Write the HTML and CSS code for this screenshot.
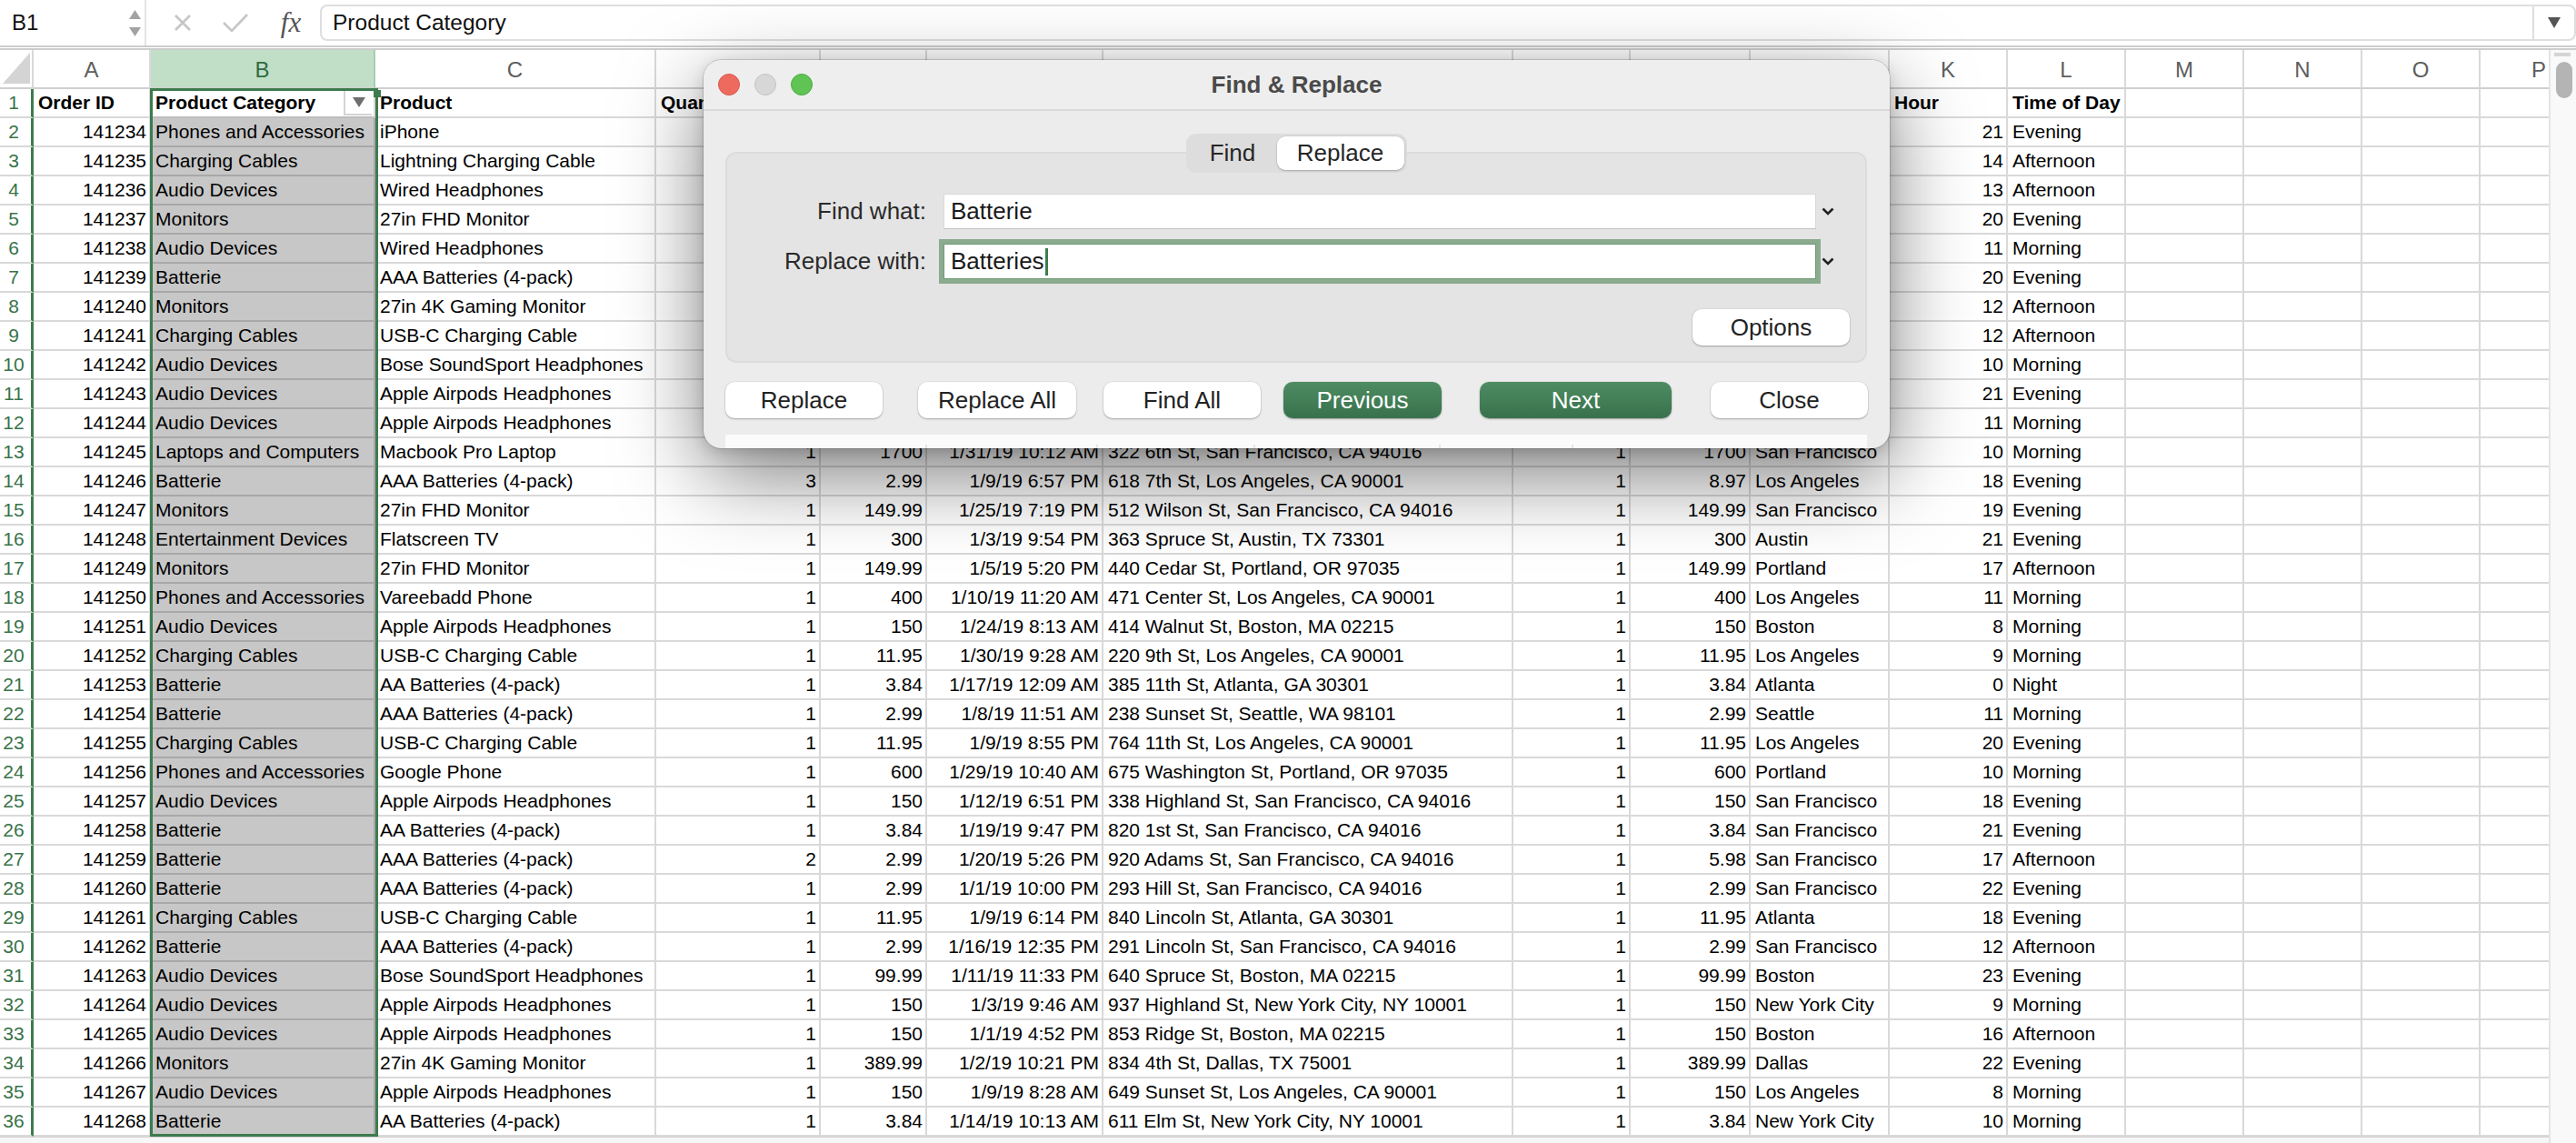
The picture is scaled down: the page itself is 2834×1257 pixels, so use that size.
FILE: index.html
```html
<!DOCTYPE html>
<html lang="en">
<head>
<meta charset="utf-8">
<title>Find &amp; Replace</title>
<link rel="stylesheet" href="styles.css">
</head>
<body>
<div class="fbar">
  <div class="namebox">
    <span>B1</span>
    <span class="spin">
      <svg width="13" height="10" viewBox="0 0 13 10"><polygon points="6.5,0 13,10 0,10" fill="#a3a3a3"/></svg>
      <svg width="13" height="10" viewBox="0 0 13 10"><polygon points="0,0 13,0 6.5,10" fill="#a3a3a3"/></svg>
    </span>
  </div>
  <div class="fbtns">
    <span class="fi"><svg width="20" height="18" viewBox="0 0 20 18"><path d="M2 1 L18 17 M18 1 L2 17" stroke="#c6c6c6" stroke-width="2.6" fill="none"/></svg></span>
    <span class="fi"><svg width="30" height="22" viewBox="0 0 30 22"><polyline points="2,11 11,20 28,2" stroke="#c6c6c6" stroke-width="2.6" fill="none"/></svg></span>
    <span class="fi fx">fx</span>
  </div>
  <div class="fxin">Product Category</div>
  <div class="fxdd"><svg width="14" height="12" viewBox="0 0 14 12"><polygon points="0,0 14,0 7,12" fill="#555"/></svg></div>
</div>
<div class="sep"></div>
<div class="sheetwrap">
  <div class="sheet">
    <div class="row colhdr"><span class="corner"><svg width="30" height="34" viewBox="0 0 30 34"><polygon points="30,0 30,34 0,34" fill="#d4d4d4"/></svg></span><span>A</span><span class="s">B</span><span>C</span><span>D</span><span>E</span><span>F</span><span>G</span><span>H</span><span>I</span><span>J</span><span>K</span><span>L</span><span>M</span><span>N</span><span>O</span><span>P</span></div>
    <div class="row r1"><span class="rh">1</span><span>Order ID</span><span class="act">Product Category<b class="filt"><svg width="14" height="11" viewBox="0 0 14 11"><polygon points="0,0 14,0 7,11" fill="#6e6e6e"/></svg></b></span><span>Product</span><span>Quantity Ordered</span><span></span><span></span><span></span><span></span><span></span><span></span><span>Hour</span><span>Time of Day</span><span></span><span></span><span></span><span></span></div>
    <div class="row"><span class="rh">2</span><span class="n">141234</span><span class="s">Phones and Accessories</span><span>iPhone</span><span></span><span></span><span></span><span></span><span></span><span></span><span></span><span class="n">21</span><span>Evening</span><span></span><span></span><span></span><span></span></div>
    <div class="row"><span class="rh">3</span><span class="n">141235</span><span class="s">Charging Cables</span><span>Lightning Charging Cable</span><span></span><span></span><span></span><span></span><span></span><span></span><span></span><span class="n">14</span><span>Afternoon</span><span></span><span></span><span></span><span></span></div>
    <div class="row"><span class="rh">4</span><span class="n">141236</span><span class="s">Audio Devices</span><span>Wired Headphones</span><span></span><span></span><span></span><span></span><span></span><span></span><span></span><span class="n">13</span><span>Afternoon</span><span></span><span></span><span></span><span></span></div>
    <div class="row"><span class="rh">5</span><span class="n">141237</span><span class="s">Monitors</span><span>27in FHD Monitor</span><span></span><span></span><span></span><span></span><span></span><span></span><span></span><span class="n">20</span><span>Evening</span><span></span><span></span><span></span><span></span></div>
    <div class="row"><span class="rh">6</span><span class="n">141238</span><span class="s">Audio Devices</span><span>Wired Headphones</span><span></span><span></span><span></span><span></span><span></span><span></span><span></span><span class="n">11</span><span>Morning</span><span></span><span></span><span></span><span></span></div>
    <div class="row"><span class="rh">7</span><span class="n">141239</span><span class="s">Batterie</span><span>AAA Batteries (4-pack)</span><span></span><span></span><span></span><span></span><span></span><span></span><span></span><span class="n">20</span><span>Evening</span><span></span><span></span><span></span><span></span></div>
    <div class="row"><span class="rh">8</span><span class="n">141240</span><span class="s">Monitors</span><span>27in 4K Gaming Monitor</span><span></span><span></span><span></span><span></span><span></span><span></span><span></span><span class="n">12</span><span>Afternoon</span><span></span><span></span><span></span><span></span></div>
    <div class="row"><span class="rh">9</span><span class="n">141241</span><span class="s">Charging Cables</span><span>USB-C Charging Cable</span><span></span><span></span><span></span><span></span><span></span><span></span><span></span><span class="n">12</span><span>Afternoon</span><span></span><span></span><span></span><span></span></div>
    <div class="row"><span class="rh">10</span><span class="n">141242</span><span class="s">Audio Devices</span><span>Bose SoundSport Headphones</span><span></span><span></span><span></span><span></span><span></span><span></span><span></span><span class="n">10</span><span>Morning</span><span></span><span></span><span></span><span></span></div>
    <div class="row"><span class="rh">11</span><span class="n">141243</span><span class="s">Audio Devices</span><span>Apple Airpods Headphones</span><span></span><span></span><span></span><span></span><span></span><span></span><span></span><span class="n">21</span><span>Evening</span><span></span><span></span><span></span><span></span></div>
    <div class="row"><span class="rh">12</span><span class="n">141244</span><span class="s">Audio Devices</span><span>Apple Airpods Headphones</span><span></span><span></span><span></span><span></span><span></span><span></span><span></span><span class="n">11</span><span>Morning</span><span></span><span></span><span></span><span></span></div>
    <div class="row"><span class="rh">13</span><span class="n">141245</span><span class="s">Laptops and Computers</span><span>Macbook Pro Laptop</span><span class="n">1</span><span class="n">1700</span><span class="n">1/31/19 10:12 AM</span><span>322 6th St, San Francisco, CA 94016</span><span class="n">1</span><span class="n">1700</span><span>San Francisco</span><span class="n">10</span><span>Morning</span><span></span><span></span><span></span><span></span></div>
    <div class="row"><span class="rh">14</span><span class="n">141246</span><span class="s">Batterie</span><span>AAA Batteries (4-pack)</span><span class="n">3</span><span class="n">2.99</span><span class="n">1/9/19 6:57 PM</span><span>618 7th St, Los Angeles, CA 90001</span><span class="n">1</span><span class="n">8.97</span><span>Los Angeles</span><span class="n">18</span><span>Evening</span><span></span><span></span><span></span><span></span></div>
    <div class="row"><span class="rh">15</span><span class="n">141247</span><span class="s">Monitors</span><span>27in FHD Monitor</span><span class="n">1</span><span class="n">149.99</span><span class="n">1/25/19 7:19 PM</span><span>512 Wilson St, San Francisco, CA 94016</span><span class="n">1</span><span class="n">149.99</span><span>San Francisco</span><span class="n">19</span><span>Evening</span><span></span><span></span><span></span><span></span></div>
    <div class="row"><span class="rh">16</span><span class="n">141248</span><span class="s">Entertainment Devices</span><span>Flatscreen TV</span><span class="n">1</span><span class="n">300</span><span class="n">1/3/19 9:54 PM</span><span>363 Spruce St, Austin, TX 73301</span><span class="n">1</span><span class="n">300</span><span>Austin</span><span class="n">21</span><span>Evening</span><span></span><span></span><span></span><span></span></div>
    <div class="row"><span class="rh">17</span><span class="n">141249</span><span class="s">Monitors</span><span>27in FHD Monitor</span><span class="n">1</span><span class="n">149.99</span><span class="n">1/5/19 5:20 PM</span><span>440 Cedar St, Portland, OR 97035</span><span class="n">1</span><span class="n">149.99</span><span>Portland</span><span class="n">17</span><span>Afternoon</span><span></span><span></span><span></span><span></span></div>
    <div class="row"><span class="rh">18</span><span class="n">141250</span><span class="s">Phones and Accessories</span><span>Vareebadd Phone</span><span class="n">1</span><span class="n">400</span><span class="n">1/10/19 11:20 AM</span><span>471 Center St, Los Angeles, CA 90001</span><span class="n">1</span><span class="n">400</span><span>Los Angeles</span><span class="n">11</span><span>Morning</span><span></span><span></span><span></span><span></span></div>
    <div class="row"><span class="rh">19</span><span class="n">141251</span><span class="s">Audio Devices</span><span>Apple Airpods Headphones</span><span class="n">1</span><span class="n">150</span><span class="n">1/24/19 8:13 AM</span><span>414 Walnut St, Boston, MA 02215</span><span class="n">1</span><span class="n">150</span><span>Boston</span><span class="n">8</span><span>Morning</span><span></span><span></span><span></span><span></span></div>
    <div class="row"><span class="rh">20</span><span class="n">141252</span><span class="s">Charging Cables</span><span>USB-C Charging Cable</span><span class="n">1</span><span class="n">11.95</span><span class="n">1/30/19 9:28 AM</span><span>220 9th St, Los Angeles, CA 90001</span><span class="n">1</span><span class="n">11.95</span><span>Los Angeles</span><span class="n">9</span><span>Morning</span><span></span><span></span><span></span><span></span></div>
    <div class="row"><span class="rh">21</span><span class="n">141253</span><span class="s">Batterie</span><span>AA Batteries (4-pack)</span><span class="n">1</span><span class="n">3.84</span><span class="n">1/17/19 12:09 AM</span><span>385 11th St, Atlanta, GA 30301</span><span class="n">1</span><span class="n">3.84</span><span>Atlanta</span><span class="n">0</span><span>Night</span><span></span><span></span><span></span><span></span></div>
    <div class="row"><span class="rh">22</span><span class="n">141254</span><span class="s">Batterie</span><span>AAA Batteries (4-pack)</span><span class="n">1</span><span class="n">2.99</span><span class="n">1/8/19 11:51 AM</span><span>238 Sunset St, Seattle, WA 98101</span><span class="n">1</span><span class="n">2.99</span><span>Seattle</span><span class="n">11</span><span>Morning</span><span></span><span></span><span></span><span></span></div>
    <div class="row"><span class="rh">23</span><span class="n">141255</span><span class="s">Charging Cables</span><span>USB-C Charging Cable</span><span class="n">1</span><span class="n">11.95</span><span class="n">1/9/19 8:55 PM</span><span>764 11th St, Los Angeles, CA 90001</span><span class="n">1</span><span class="n">11.95</span><span>Los Angeles</span><span class="n">20</span><span>Evening</span><span></span><span></span><span></span><span></span></div>
    <div class="row"><span class="rh">24</span><span class="n">141256</span><span class="s">Phones and Accessories</span><span>Google Phone</span><span class="n">1</span><span class="n">600</span><span class="n">1/29/19 10:40 AM</span><span>675 Washington St, Portland, OR 97035</span><span class="n">1</span><span class="n">600</span><span>Portland</span><span class="n">10</span><span>Morning</span><span></span><span></span><span></span><span></span></div>
    <div class="row"><span class="rh">25</span><span class="n">141257</span><span class="s">Audio Devices</span><span>Apple Airpods Headphones</span><span class="n">1</span><span class="n">150</span><span class="n">1/12/19 6:51 PM</span><span>338 Highland St, San Francisco, CA 94016</span><span class="n">1</span><span class="n">150</span><span>San Francisco</span><span class="n">18</span><span>Evening</span><span></span><span></span><span></span><span></span></div>
    <div class="row"><span class="rh">26</span><span class="n">141258</span><span class="s">Batterie</span><span>AA Batteries (4-pack)</span><span class="n">1</span><span class="n">3.84</span><span class="n">1/19/19 9:47 PM</span><span>820 1st St, San Francisco, CA 94016</span><span class="n">1</span><span class="n">3.84</span><span>San Francisco</span><span class="n">21</span><span>Evening</span><span></span><span></span><span></span><span></span></div>
    <div class="row"><span class="rh">27</span><span class="n">141259</span><span class="s">Batterie</span><span>AAA Batteries (4-pack)</span><span class="n">2</span><span class="n">2.99</span><span class="n">1/20/19 5:26 PM</span><span>920 Adams St, San Francisco, CA 94016</span><span class="n">1</span><span class="n">5.98</span><span>San Francisco</span><span class="n">17</span><span>Afternoon</span><span></span><span></span><span></span><span></span></div>
    <div class="row"><span class="rh">28</span><span class="n">141260</span><span class="s">Batterie</span><span>AAA Batteries (4-pack)</span><span class="n">1</span><span class="n">2.99</span><span class="n">1/1/19 10:00 PM</span><span>293 Hill St, San Francisco, CA 94016</span><span class="n">1</span><span class="n">2.99</span><span>San Francisco</span><span class="n">22</span><span>Evening</span><span></span><span></span><span></span><span></span></div>
    <div class="row"><span class="rh">29</span><span class="n">141261</span><span class="s">Charging Cables</span><span>USB-C Charging Cable</span><span class="n">1</span><span class="n">11.95</span><span class="n">1/9/19 6:14 PM</span><span>840 Lincoln St, Atlanta, GA 30301</span><span class="n">1</span><span class="n">11.95</span><span>Atlanta</span><span class="n">18</span><span>Evening</span><span></span><span></span><span></span><span></span></div>
    <div class="row"><span class="rh">30</span><span class="n">141262</span><span class="s">Batterie</span><span>AAA Batteries (4-pack)</span><span class="n">1</span><span class="n">2.99</span><span class="n">1/16/19 12:35 PM</span><span>291 Lincoln St, San Francisco, CA 94016</span><span class="n">1</span><span class="n">2.99</span><span>San Francisco</span><span class="n">12</span><span>Afternoon</span><span></span><span></span><span></span><span></span></div>
    <div class="row"><span class="rh">31</span><span class="n">141263</span><span class="s">Audio Devices</span><span>Bose SoundSport Headphones</span><span class="n">1</span><span class="n">99.99</span><span class="n">1/11/19 11:33 PM</span><span>640 Spruce St, Boston, MA 02215</span><span class="n">1</span><span class="n">99.99</span><span>Boston</span><span class="n">23</span><span>Evening</span><span></span><span></span><span></span><span></span></div>
    <div class="row"><span class="rh">32</span><span class="n">141264</span><span class="s">Audio Devices</span><span>Apple Airpods Headphones</span><span class="n">1</span><span class="n">150</span><span class="n">1/3/19 9:46 AM</span><span>937 Highland St, New York City, NY 10001</span><span class="n">1</span><span class="n">150</span><span>New York City</span><span class="n">9</span><span>Morning</span><span></span><span></span><span></span><span></span></div>
    <div class="row"><span class="rh">33</span><span class="n">141265</span><span class="s">Audio Devices</span><span>Apple Airpods Headphones</span><span class="n">1</span><span class="n">150</span><span class="n">1/1/19 4:52 PM</span><span>853 Ridge St, Boston, MA 02215</span><span class="n">1</span><span class="n">150</span><span>Boston</span><span class="n">16</span><span>Afternoon</span><span></span><span></span><span></span><span></span></div>
    <div class="row"><span class="rh">34</span><span class="n">141266</span><span class="s">Monitors</span><span>27in 4K Gaming Monitor</span><span class="n">1</span><span class="n">389.99</span><span class="n">1/2/19 10:21 PM</span><span>834 4th St, Dallas, TX 75001</span><span class="n">1</span><span class="n">389.99</span><span>Dallas</span><span class="n">22</span><span>Evening</span><span></span><span></span><span></span><span></span></div>
    <div class="row"><span class="rh">35</span><span class="n">141267</span><span class="s">Audio Devices</span><span>Apple Airpods Headphones</span><span class="n">1</span><span class="n">150</span><span class="n">1/9/19 8:28 AM</span><span>649 Sunset St, Los Angeles, CA 90001</span><span class="n">1</span><span class="n">150</span><span>Los Angeles</span><span class="n">8</span><span>Morning</span><span></span><span></span><span></span><span></span></div>
    <div class="row"><span class="rh">36</span><span class="n">141268</span><span class="s">Batterie</span><span>AA Batteries (4-pack)</span><span class="n">1</span><span class="n">3.84</span><span class="n">1/14/19 10:13 AM</span><span>611 Elm St, New York City, NY 10001</span><span class="n">1</span><span class="n">3.84</span><span>New York City</span><span class="n">10</span><span>Morning</span><span></span><span></span><span></span><span></span></div>
    <div class="hfoot"></div>
    <div class="selbox"></div>
  </div>
  <div class="vscroll"><div class="grip"></div><div class="thumb"></div></div>
</div>

<div class="dlg">
  <div class="titlebar">
    <div class="lights"><span class="light red"></span><span class="light gray"></span><span class="light green"></span></div>
    <div class="title">Find &amp; Replace</div>
    <div></div>
  </div>
  <div class="dbody">
    <div class="seg"><span class="tab1">Find</span><span class="tab2">Replace</span></div>
    <div class="panel">
      <div class="frow">
        <span class="lbl">Find what:</span>
        <span class="inp">Batterie</span>
        <svg class="chev" width="14" height="9" viewBox="0 0 14 9"><polyline points="1.5,1.5 7,7 12.5,1.5" fill="none" stroke="#222" stroke-width="2.6"/></svg>
      </div>
      <div class="frow frow2">
        <span class="lbl">Replace with:</span>
        <span class="inp focus">Batteries<i class="caret"></i></span>
        <svg class="chev" width="14" height="9" viewBox="0 0 14 9"><polyline points="1.5,1.5 7,7 12.5,1.5" fill="none" stroke="#222" stroke-width="2.6"/></svg>
      </div>
      <div class="optrow"><span class="btn opt">Options</span></div>
    </div>
    <div class="btns">
      <span class="btn b1">Replace</span>
      <span class="btn b2">Replace All</span>
      <span class="btn b3">Find All</span>
      <span class="btn b4 primary">Previous</span>
      <span class="btn b5 primary">Next</span>
      <span class="btn b6">Close</span>
    </div>
    <div class="results"><span class="rc1"></span><span class="rc2"></span><span class="rc3"></span><span class="rc4"></span><span class="rc5"></span></div>
  </div>
</div>
</body>
</html>
```

FILE: styles.css
```css
* { box-sizing: border-box; }
html, body { margin: 0; padding: 0; }
body {
  width: 2834px;
  height: 1257px;
  overflow: hidden;
  background: #fff;
  font-family: "Liberation Sans", Arial, sans-serif;
  color: #111;
}

/* formula bar */
.fbar { display: flex; align-items: center; height: 50px; background: #fff; }
.namebox {
  width: 161px; height: 50px; flex: none;
  display: flex; align-items: center; justify-content: space-between;
  padding: 0 4px 0 13px;
  border-right: 2px solid #e4e4e4;
  font-size: 24px; color: #111;
}
.spin { display: flex; flex-direction: column; gap: 9px; }
.spin svg { display: block; }
.fbtns { display: flex; align-items: center; height: 50px; padding-left: 11px; flex: none; }
.fi { width: 58px; display: flex; justify-content: center; align-items: center; }
.fi svg { display: block; }
.fx { width: 64px; font-family: "Liberation Serif", serif; font-style: italic; font-size: 31px; color: #555; }
.fxin {
  flex: 1; height: 40px;
  border: 2px solid #dedede; border-right: none;
  border-radius: 8px 0 0 8px;
  padding-left: 12px;
  font-size: 24.5px; line-height: 36px; color: #111;
}
.fxdd {
  width: 48px; height: 40px; flex: none;
  border: 2px solid #dedede; border-radius: 0 8px 8px 0;
  display: flex; align-items: center; justify-content: center;
}
.sep { height: 5px; border-top: 2px solid #cdcdcd; border-bottom: 2px solid #cdcdcd; }

/* sheet */
.sheetwrap { display: flex; height: 1202px; }
.sheet {
  width: 2804px; flex: none; position: relative; overflow: hidden;
  font-family: "Liberation Sans", Arial, sans-serif;
  font-size: 21px; color: #000;
}
.row {
  display: grid;
  grid-template-columns: 37px 129px 247px 309px 181px 117px 194px 451px 129px 132px 153px 130px 130px 130px 130px 130px 130px;
  grid-template-rows: 32px;
  height: 32px;
}
.row > span {
  border-right: 2px solid #d9d9d9;
  border-bottom: 2px solid #d9d9d9;
  padding: 0 3px 0 5px;
  line-height: 30px;
  white-space: nowrap;
  overflow: hidden;
}
.row > .n { text-align: right; }
.row > .s { background: #c7c7c7; border-right-color: #a8a8a8; border-bottom-color: #a8a8a8; }
.row > .rh {
  color: #387349; text-align: center; padding: 0 4px 0 0;
  border-right: 3px solid #3d7b4f;
}
.row.colhdr { height: 43px; grid-template-rows: 43px; }
.row.colhdr > span {
  text-align: center; line-height: 38px; padding: 3px 0 0 0;
  color: #5e5e5e; background: #fff;
  border-bottom-color: #cfcfcf; font-size: 24px;
}
.row.colhdr > .s { background: #c1dec7; color: #2f6c41; border-right-color: #a9cdb1; }
.row.colhdr > .corner { padding: 3px 4px 0 3px; }
.corner svg { display: block; }
.r1 > span { font-weight: bold; }
.r1 > .rh { font-weight: normal; }
.r1 > .act {
  display: flex; align-items: center; justify-content: space-between;
  padding: 0 2px 0 5px; background: #fff;
  border-bottom-color: #bdbdbd;
}
.filt {
  width: 31px; height: 28px; flex: none;
  display: flex; align-items: center; justify-content: center;
  border-left: 2px solid #d4d4d4; border-bottom: 2px solid #d4d4d4;
  background: #fff;
}
.hfoot { height: 7px; border-top: 1px solid #d0d0d0; background: #f7f7f7; }
.selbox {
  position: absolute; left: 165px; top: 42px; width: 251px; bottom: 7px;
  border: 3px solid #3d7b4f; pointer-events: none;
}
.selbox::after {
  content: ""; position: absolute; right: -6px; top: -1px;
  width: 8px; height: 8px; background: #3d7b4f;
}
.vscroll {
  width: 30px; flex: none; background: #f9f9f9; border-left: 2px solid #e4e4e4;
  padding-top: 3px;
}
.grip { width: 18px; height: 4px; background: #d5d5d5; margin-left: 4px; }
.thumb { width: 18px; height: 40px; border-radius: 9px; background: #b4b4b4; margin: 6px 0 0 6px; }

/* dialog */
.dlg {
  position: absolute; left: 774px; top: 66px;
  width: 1305px; height: 427px;
  background: #ececec;
  border-radius: 20px;
  overflow: hidden;
  box-shadow: 0 0 0 1px rgba(0,0,0,0.14), 0 30px 90px rgba(0,0,0,0.5), 0 4px 16px rgba(0,0,0,0.15);
  font-family: "Liberation Sans", Arial, sans-serif;
  color: #222;
  display: flex; flex-direction: column;
}
.titlebar {
  height: 56px; flex: none;
  display: grid; grid-template-columns: 1fr auto 1fr; align-items: center;
  border-bottom: 2px solid #dadada; background: #eeeeee;
}
.lights { display: flex; gap: 16px; padding-left: 16px; }
.light { width: 24px; height: 24px; border-radius: 50%; }
.red { background: #ee6a5f; border: 1px solid #d65a4f; }
.gray { background: #d7d7d7; border: 1px solid #c2c2c2; }
.green { background: #5fc453; border: 1px solid #4caa43; }
.title { font-weight: bold; font-size: 26px; color: #4a4a4a; }

.dbody { display: flex; flex-direction: column; padding: 25px 25px 0 24px; }
.seg {
  align-self: center;
  display: flex; height: 43px; padding: 3px;
  background: #dddddd; border-radius: 11px;
  margin-bottom: -23px; position: relative; z-index: 1;
  font-size: 26px;
}
.seg span { line-height: 37px; text-align: center; border-radius: 9px; color: #262626; }
.tab1 { width: 97px; }
.tab2 { width: 140px; background: #fff; box-shadow: 0 1px 2px rgba(0,0,0,0.22), 0 0 0 0.5px rgba(0,0,0,0.08); }

.panel {
  height: 232px;
  background: #e4e4e4;
  border: 2px solid #dcdcdc;
  border-radius: 12px;
  padding: 44px 17px 17px 0;
  display: flex; flex-direction: column;
}
.frow { display: flex; align-items: center; height: 39px; font-size: 26px; }
.frow2 { margin-top: 16px; }
.lbl { width: 219px; margin-right: 19px; text-align: right; color: #2a2a2a; }
.inp {
  width: 960px; height: 39px;
  background: #fff;
  border: 1px solid #d8d8d8; border-bottom-color: #c3c3c3;
  padding-left: 7px; line-height: 37px; color: #1a1a1a;
  display: flex; align-items: center;
}
.inp.focus { border-color: #6f9a75; box-shadow: 0 0 0 5px #8bab8e; }
.caret { display: block; width: 3px; height: 30px; background: #3d7b4f; margin-left: 1px; }
.chev { margin-left: 6px; display: block; }
.optrow { display: flex; justify-content: flex-end; margin-top: 33px; }

.btn {
  height: 40px; border-radius: 10px; background: #fff;
  box-shadow: 0 1px 2px rgba(0,0,0,0.28), 0 0 0 0.5px rgba(0,0,0,0.08);
  font-size: 26px; line-height: 40px; text-align: center; color: #222;
  flex: none;
}
.opt { width: 173px; }
.btns { display: flex; margin-top: 21px; }
.b1 { width: 173px; }
.b2 { width: 174px; margin-left: 39px; }
.b3 { width: 173px; margin-left: 30px; }
.b4 { width: 174px; margin-left: 25px; }
.b5 { width: 211px; margin-left: 42px; }
.b6 { width: 173px; margin-left: 43px; }
.primary { background: linear-gradient(#4e8c62, #37714c); color: #fff; }

.results { display: flex; height: 15px; margin-top: 18px; background: #fbfbfb; }
.results span { border-right: 2px solid #e3e3e3; margin-top: 11px; }
.rc1 { width: 222px; }
.rc2 { width: 188px; }
.rc3 { width: 173px; }
.rc4 { width: 204px; }
.rc5 { width: 146px; }
```
